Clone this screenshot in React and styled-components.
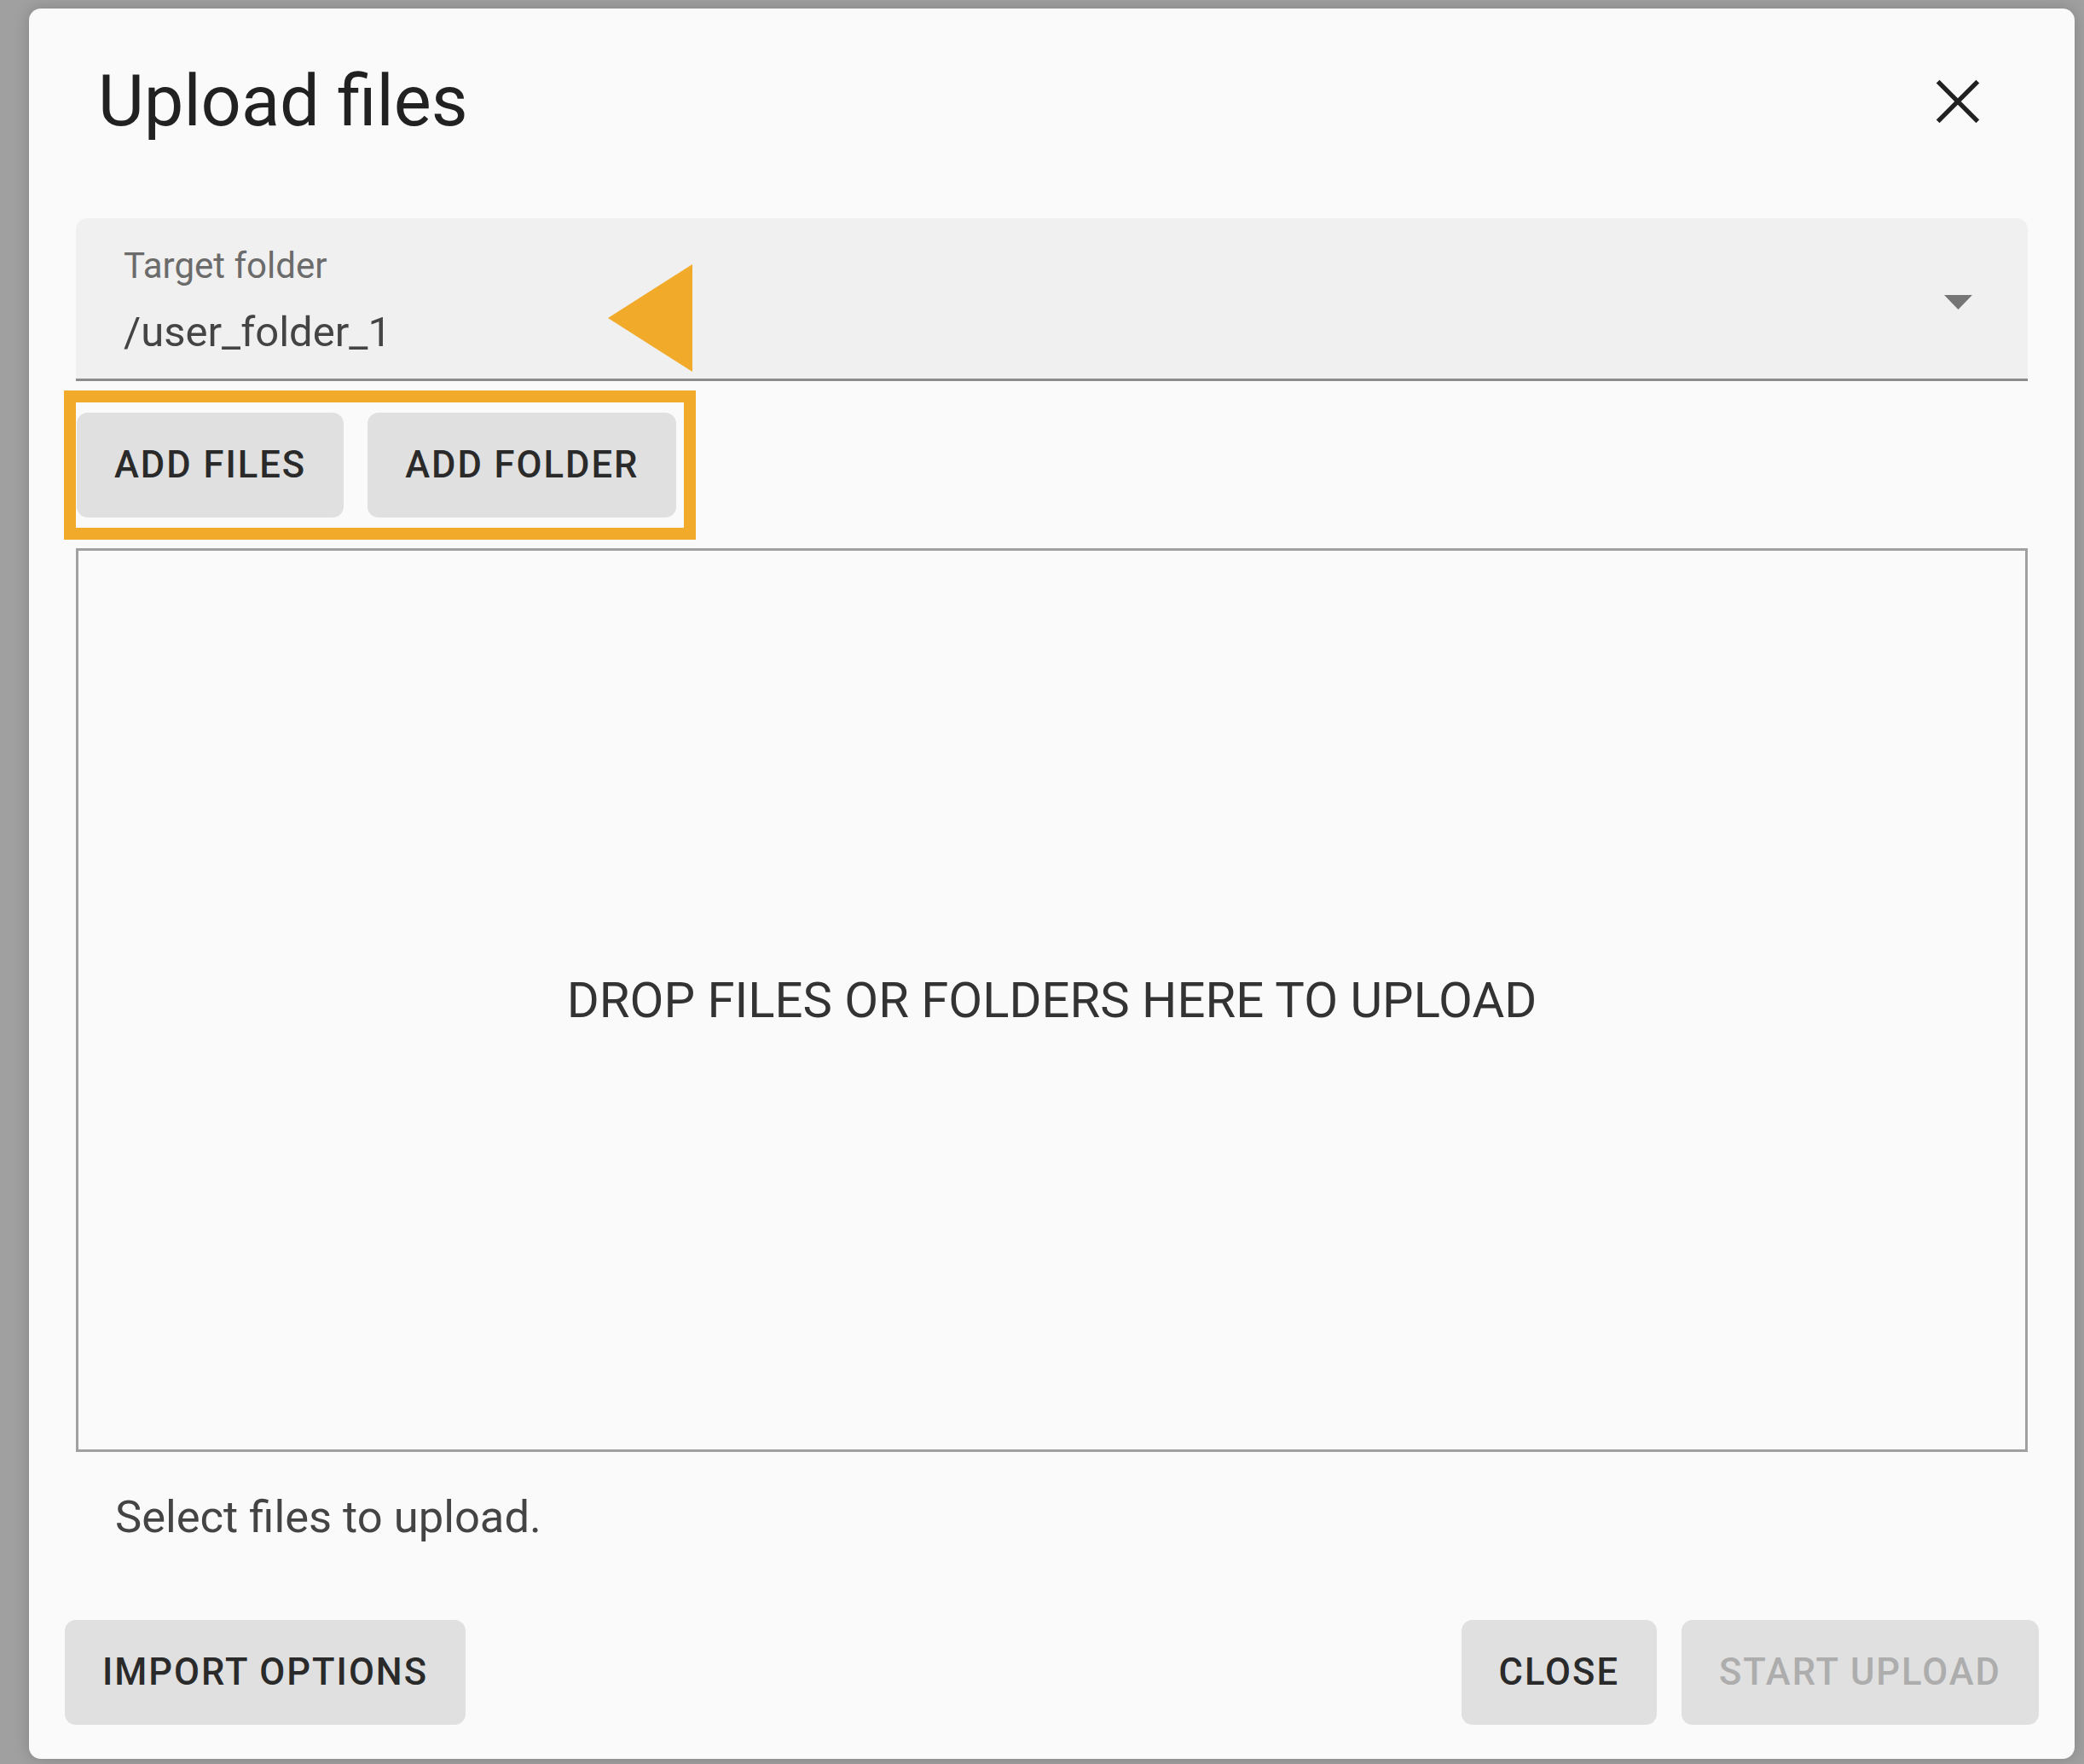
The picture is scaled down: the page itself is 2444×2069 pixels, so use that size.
import React from "react";
import styled, { createGlobalStyle } from "styled-components";

const GlobalStyle = createGlobalStyle`
  html, body {
    margin: 0;
    padding: 0;
  }
  body {
    width: 2444px;
    height: 2069px;
    overflow: hidden;
    background: #a0a0a0;
    font-family: Roboto, "Liberation Sans", sans-serif;
  }
`;

const Backdrop = styled.div`
  box-sizing: border-box;
  width: 2444px;
  height: 2069px;
  padding: 10px 0 0 34px;
  background: #a0a0a0;
`;

const Dialog = styled.div`
  width: 2399px;
  height: 2053px;
  background: #fafafa;
  border-radius: 14px;
  box-shadow: 0 0 18px rgba(0, 0, 0, 0.18);
  display: flex;
  flex-direction: column;
`;

const Header = styled.div`
  display: flex;
  align-items: center;
  justify-content: space-between;
  padding: 54px 97px 0 81px;
`;

const Title = styled.h2`
  margin: 0;
  font-size: 83px;
  font-weight: 400;
  line-height: 110px;
  color: #212121;
`;

const IconButton = styled.button`
  display: flex;
  width: 80px;
  height: 80px;
  padding: 0;
  border: none;
  background: none;
  color: #212121;
  cursor: pointer;
`;

const Content = styled.div`
  display: flex;
  flex-direction: column;
  padding: 82px 55px 0;
`;

const Field = styled.div`
  position: relative;
  display: flex;
  height: 153px;
  padding: 35px 65px 0 56px;
  background: #f0f0f0;
  border-radius: 13px 13px 0 0;
  border-bottom: 3px solid #8c8c8c;
`;

const FieldText = styled.div`
  flex: 1;
  display: flex;
  flex-direction: column;
  gap: 33px;
`;

const Label = styled.span`
  font-size: 42px;
  line-height: 42px;
  color: #6b6b6b;
`;

const Value = styled.span`
  font-size: 49px;
  line-height: 48px;
  color: #444;
`;

const DropArrow = styled.svg`
  align-self: center;
  margin-top: -26px;
  width: 33px;
  height: 17px;
  fill: #757575;
`;

const Pointer = styled.svg`
  position: absolute;
  left: 624px;
  top: 54px;
  width: 99px;
  height: 126px;
  fill: #f2aa2b;
`;

const Highlight = styled.div`
  align-self: flex-start;
  display: flex;
  gap: 28px;
  margin: 11px 0 0 -14px;
  padding: 12px 9px 12px 1px;
  border: 14px solid #f2aa2b;
`;

const Button = styled.button`
  height: 123px;
  padding: 0 44px;
  border: none;
  border-radius: 13px;
  background: #e0e0e0;
  color: ${(p) => (p.disabled ? "#adadad" : "#2a2a2a")};
  font-family: Roboto, "Liberation Sans", sans-serif;
  font-size: 43.5px;
  font-weight: 500;
  letter-spacing: 2px;
  text-transform: uppercase;
  cursor: ${(p) => (p.disabled ? "default" : "pointer")};
`;

const DropZone = styled.div`
  box-sizing: border-box;
  height: 1060px;
  margin-top: 10px;
  border: 3px solid #a0a0a0;
  display: flex;
  align-items: center;
  justify-content: center;
  font-size: 58px;
  color: #333;
  text-transform: uppercase;
`;

const Helper = styled.p`
  margin: 50px 0 0 46px;
  font-size: 52.5px;
  line-height: 52px;
  color: #444;
`;

const Actions = styled.div`
  margin-top: auto;
  display: flex;
  gap: 29px;
  padding: 0 42px 40px;
`;

const Spacer = styled.div`
  flex: 1;
`;

export default function App() {
  return (
    <Backdrop>
      <GlobalStyle />
      <Dialog>
        <Header>
          <Title>Upload files</Title>
          <IconButton aria-label="close">
            <svg viewBox="0 0 24 24" width="80" height="80">
              <path
                d="M5 5 19 19M19 5 5 19"
                stroke="currentColor"
                strokeWidth="1.6"
                fill="none"
              />
            </svg>
          </IconButton>
        </Header>
        <Content>
          <Field>
            <FieldText>
              <Label>Target folder</Label>
              <Value>/user_folder_1</Value>
            </FieldText>
            <DropArrow viewBox="0 0 33 17">
              <polygon points="0,0 33,0 16.5,17" />
            </DropArrow>
            <Pointer viewBox="0 0 99 126">
              <polygon points="99,0 0,63 99,126" />
            </Pointer>
          </Field>
          <Highlight>
            <Button>Add files</Button>
            <Button>Add folder</Button>
          </Highlight>
          <DropZone>Drop files or folders here to upload</DropZone>
          <Helper>Select files to upload.</Helper>
        </Content>
        <Actions>
          <Button>Import options</Button>
          <Spacer />
          <Button>Close</Button>
          <Button disabled>Start upload</Button>
        </Actions>
      </Dialog>
    </Backdrop>
  );
}
